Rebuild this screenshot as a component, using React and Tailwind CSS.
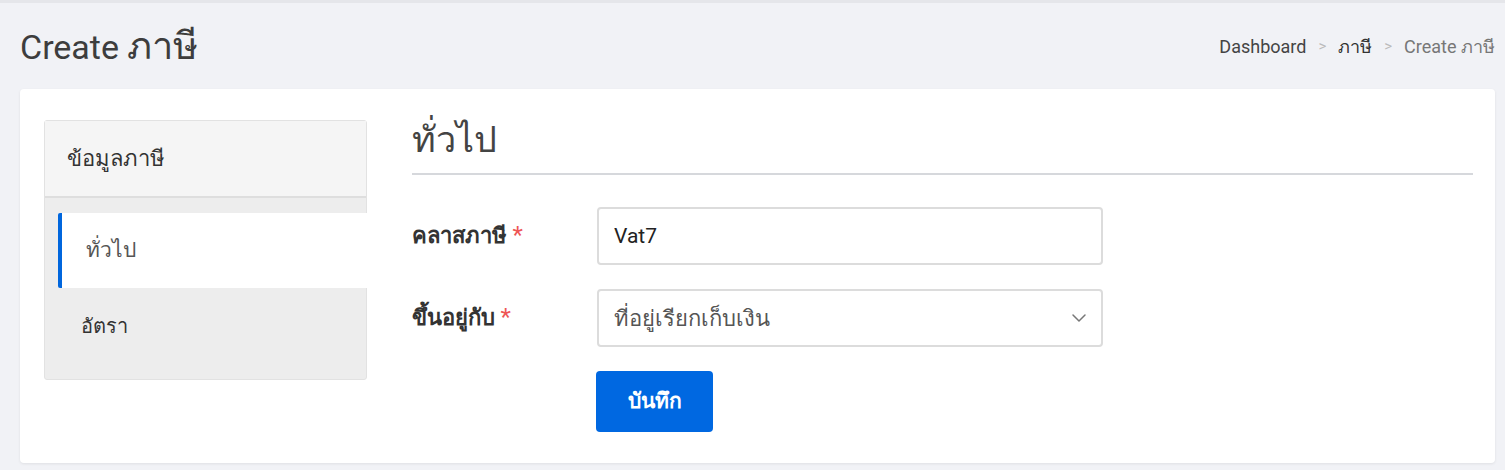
import { ChevronDown } from 'lucide-react';

const font = { fontFamily: 'Roboto, "Noto Sans", "Noto Sans Thai", sans-serif' };

const App = () => {
  return (
    <div className="min-h-[470px] bg-[#f1f2f6] border-t-[3px] border-[#e5e6ea] font-[Roboto,'Noto_Sans',sans-serif]">
      {/* Header */}
      <div className="h-[86px] flex items-center justify-between pl-5 pr-[10px]">
        <h1 className="text-[34px] text-[#3d3d3d] font-normal leading-none">
          Create <span className="text-[38px]">ภาษี</span>
        </h1>
        <nav className="flex items-center text-[18px] text-[#444]">
          <span>Dashboard</span>
          <span className="mx-[12px] text-[#bbb] text-[15px]">&gt;</span>
          <span className="text-[#333]">ภาษี</span>
          <span className="mx-[12px] text-[#bbb] text-[15px]">&gt;</span>
          <span className="text-[#777]">Create ภาษี</span>
        </nav>
      </div>

      {/* Card */}
      <div className="ml-5 mr-[10px] bg-white rounded-[4px] shadow-[0_1px_3px_rgba(0,0,0,0.08)] pt-[31px] pb-[31px] pl-6 pr-[22px] flex gap-[45px]">
        {/* Sidebar */}
        <div className="w-[323px] shrink-0 self-start h-[260px] bg-[#ededed] border border-[#e2e2e2] rounded-[3px]">
          <div className="h-[77px] bg-[#f5f5f5] border-b-2 border-[#dedede] flex items-center pl-[22px] text-[22px] text-[#333]">
            ข้อมูลภาษี
          </div>
          <div className="pt-[15px]">
            <div className="ml-[13px] -mr-px h-[75px] bg-white border-l-4 border-[#0066dd] rounded-l-[2px] flex items-center pl-6 text-[21px] text-[#555]">
              ทั่วไป
            </div>
            <div className="ml-[13px] h-[76px] flex items-center pl-[23px] text-[20px] text-[#333]">
              อัตรา
            </div>
          </div>
        </div>

        {/* Main */}
        <div className="flex-1">
          <div className="h-[55px] border-b-2 border-[#d6d8dc] flex items-center">
            <h2 className="text-[36px] text-[#444] leading-none -mt-[14px]">ทั่วไป</h2>
          </div>

          <div className="mt-[32px] flex flex-col gap-[24px]">
            <div className="flex">
              <label className="w-[185px] shrink-0 pt-[10px] text-[22px] font-bold text-[#333]">
                คลาสภาษี <span className="text-[#ee5555] text-[24px] font-normal">*</span>
              </label>
              <input
                type="text"
                defaultValue="Vat7"
                className="w-[506px] h-[58px] border-2 border-[#dcdcdc] rounded-[4px] px-[15px] text-[21px] text-[#222] outline-none"
                style={font}
              />
            </div>

            <div className="flex">
              <label className="w-[185px] shrink-0 pt-[10px] text-[22px] font-bold text-[#333]">
                ขึ้นอยู่กับ <span className="text-[#ee5555] text-[24px] font-normal">*</span>
              </label>
              <div className="w-[506px] h-[58px] border-2 border-[#dcdcdc] rounded-[4px] pl-[15px] pr-[10px] flex items-center justify-between text-[22px] text-[#555]">
                <span>ที่อยู่เรียกเก็บเงิน</span>
                <ChevronDown className="w-6 h-6 text-[#777]" strokeWidth={1.5} />
              </div>
            </div>

            <div className="flex">
              <div className="w-[184px] shrink-0" />
              <button className="w-[117px] h-[61px] bg-[#0068e1] rounded-[4px] text-white text-[21px] font-semibold">
                บันทึก
              </button>
            </div>
          </div>
        </div>
      </div>
    </div>
  );
};

export default App;
